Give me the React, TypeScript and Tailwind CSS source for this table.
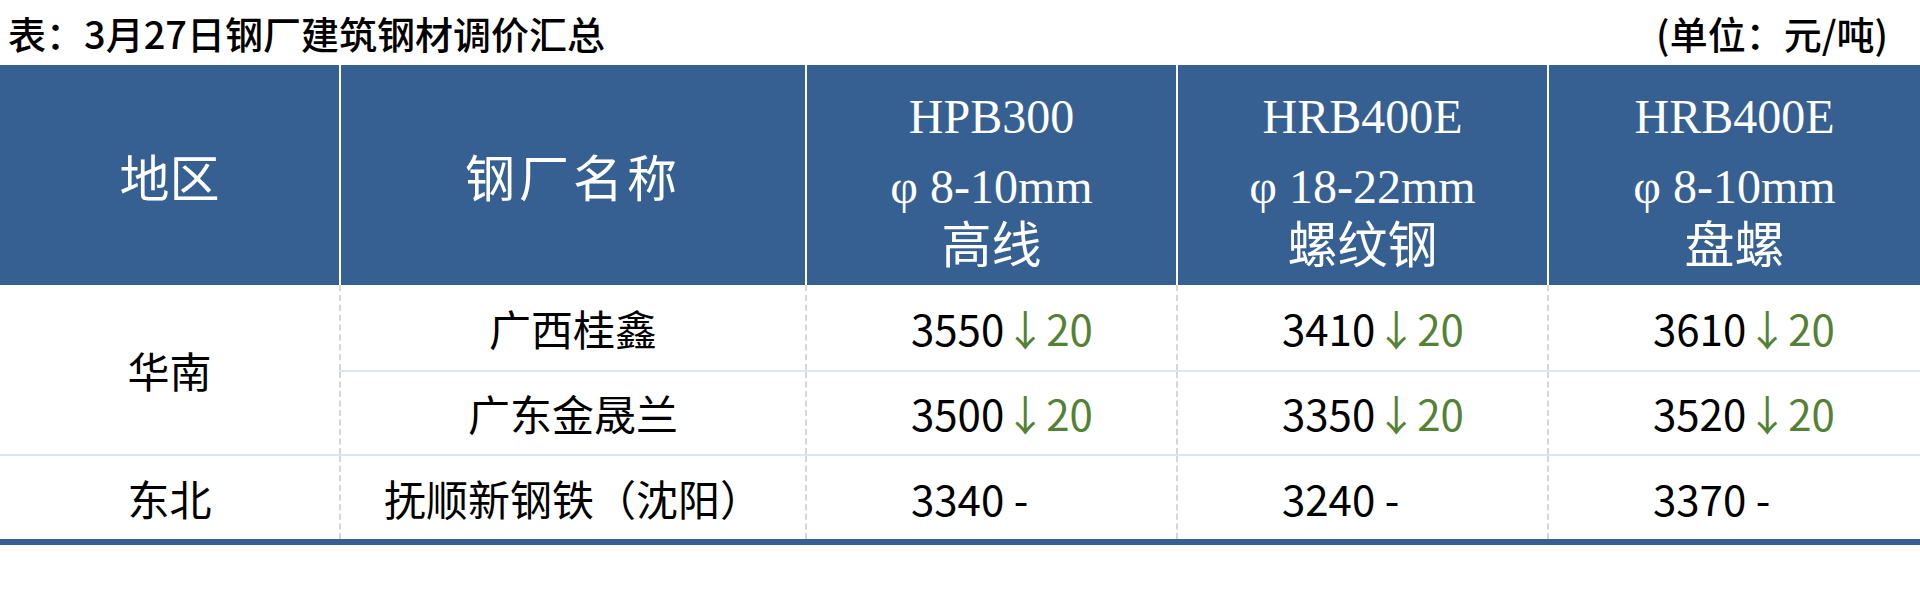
const sans = "font-['Noto_Sans_CJK_SC','Noto_Sans',sans-serif]";
const serif = "font-['Liberation_Serif','Noto_Sans_CJK_SC',serif]";

const specs = [
  { w: 'w-[371px]', grade: 'HPB300', size: '8-10mm', kind: '高线' },
  { w: 'w-[371px]', grade: 'HRB400E', size: '18-22mm', kind: '螺纹钢' },
  { w: 'w-[373px]', grade: 'HRB400E', size: '8-10mm', kind: '盘螺' },
];

const widths = ['w-[371px]', 'w-[371px]', 'w-[373px]'];

function Price({ value, change }: { value: string; change?: string }) {
  return (
    <span>
      {value}
      {change ? (
        <span className="text-[#548235]">↓{change}</span>
      ) : (
        <span> -</span>
      )}
    </span>
  );
}

function Row({
  mill,
  prices,
  className,
}: {
  mill: string;
  prices: { value: string; change?: string }[];
  className: string;
}) {
  return (
    <div className={`flex ${className}`}>
      <div className="w-[466px] flex items-center justify-center border-l-2 border-dashed border-[#d6d6d6]">
        {mill}
      </div>
      {prices.map((p, i) => (
        <div
          key={i}
          className={`${widths[i]} flex items-center pl-[104px] border-l-2 border-dashed border-[#d6d6d6]`}
        >
          <Price value={p.value} change={p.change} />
        </div>
      ))}
    </div>
  );
}

export default function App() {
  return (
    <div className={`w-[1920px] h-[591px] bg-white text-black ${sans}`}>
      <div className="h-[65px] flex items-center justify-between pl-[8px] pr-[32px] text-[38px] leading-none font-medium">
        <span>表：3月27日钢厂建筑钢材调价汇总</span>
        <span>(单位：元/吨)</span>
      </div>

      <div className="flex h-[220px] bg-[#366092] text-white">
        <div className="w-[339px] flex items-center justify-center text-[50px] leading-none">
          地区
        </div>
        <div className="w-[466px] flex items-center justify-center text-[50px] leading-none tracking-[4px] border-l-2 border-white">
          钢厂名称
        </div>
        {specs.map((s, i) => (
          <div
            key={i}
            className={`${s.w} flex flex-col items-center pt-[28px] border-l-2 border-white`}
          >
            <div className={`${serif} text-[48px] leading-none`}>{s.grade}</div>
            <div className={`${serif} text-[48px] leading-[40px] mt-[26px]`}>
              <span className="mr-[12px]">φ</span>
              {s.size}
            </div>
            <div className="text-[50px] leading-[44px] mt-[12px]">{s.kind}</div>
          </div>
        ))}
      </div>

      <div className="text-[42px] leading-none">
        <div className="flex h-[171px] border-b-2 border-[#dce6f1]">
          <div className="w-[339px] flex items-center justify-center">华南</div>
          <div className="flex flex-col">
            <Row
              className="h-[87px] border-b-2 border-[#dce6f1]"
              mill="广西桂鑫"
              prices={[
                { value: '3550', change: '20' },
                { value: '3410', change: '20' },
                { value: '3610', change: '20' },
              ]}
            />
            <Row
              className="h-[82px]"
              mill="广东金晟兰"
              prices={[
                { value: '3500', change: '20' },
                { value: '3350', change: '20' },
                { value: '3520', change: '20' },
              ]}
            />
          </div>
        </div>
        <div className="flex h-[83px]">
          <div className="w-[339px] flex items-center justify-center">东北</div>
          <Row
            className="h-[83px]"
            mill="抚顺新钢铁（沈阳）"
            prices={[{ value: '3340' }, { value: '3240' }, { value: '3370' }]}
          />
        </div>
      </div>

      <div className="h-[6px] bg-[#366092]" />
    </div>
  );
}
